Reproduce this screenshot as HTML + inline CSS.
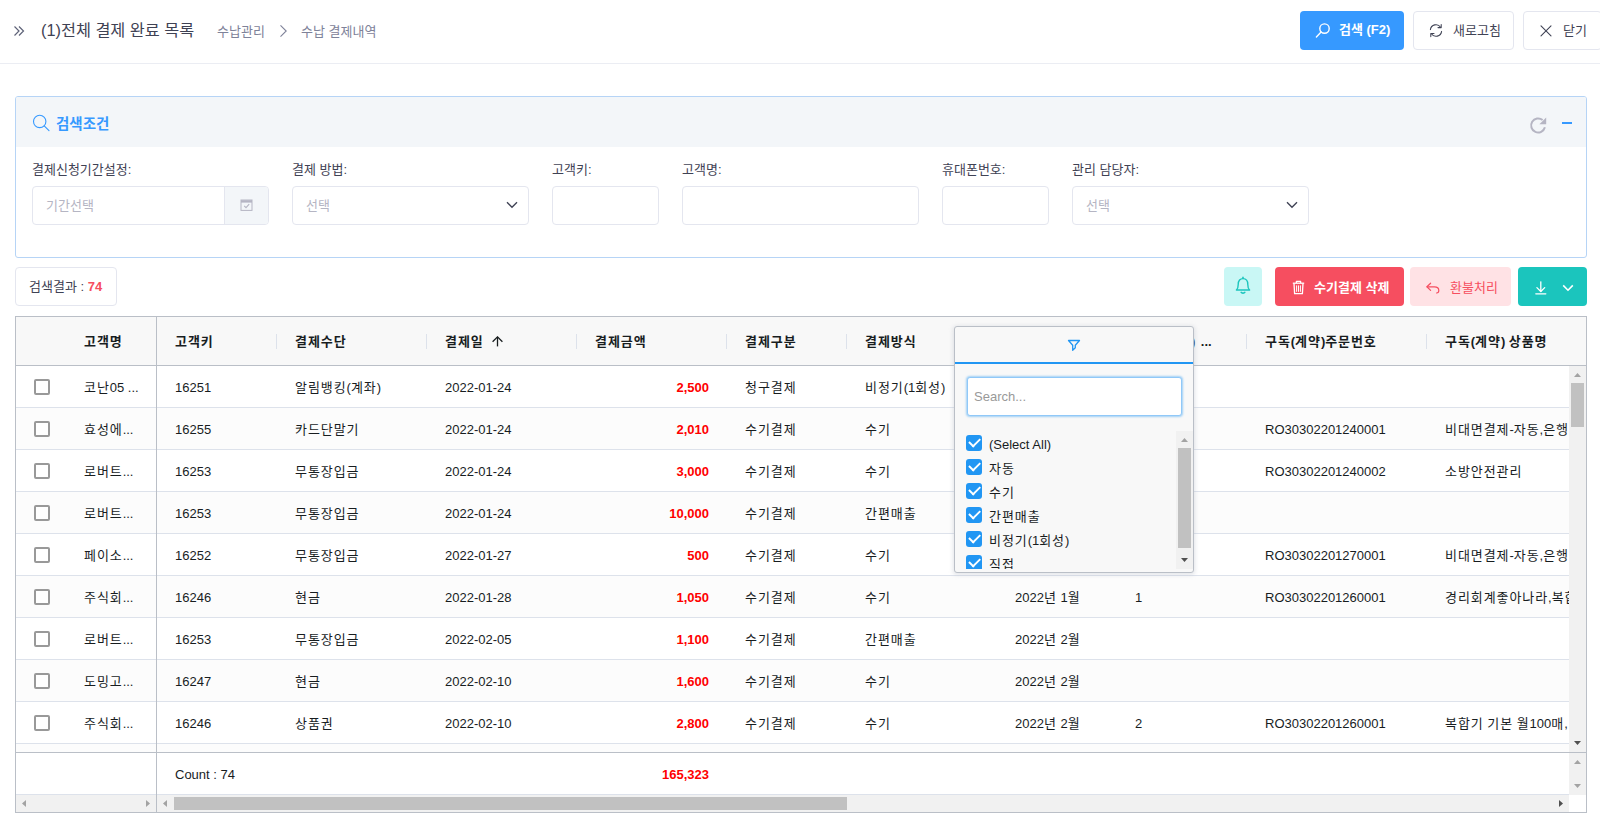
<!DOCTYPE html>
<html lang="ko">
<head>
<meta charset="utf-8">
<title>(1)전체 결제 완료 목록</title>
<style>
*{box-sizing:border-box;margin:0;padding:0}
html,body{width:1600px;height:840px;overflow:hidden;background:#fff}
body{position:relative;font-family:"Liberation Sans","Noto Sans CJK KR",sans-serif;font-size:13px;color:#3f4254}
.abs{position:absolute}
svg{display:block}
/* ---------- top header ---------- */
#hdr{left:0;top:0;width:1600px;height:64px;border-bottom:1px solid #ebedf3;background:#fff}
#title{left:41px;top:18px;font-size:16.3px;line-height:25px;color:#3f4254;white-space:nowrap;font-weight:400}
.crumb{top:22px;font-size:13px;line-height:20px;color:#7e8299;white-space:nowrap}
.tbtn{top:11px;height:39px;border-radius:4px;font-size:13px;line-height:37px;white-space:nowrap}
.tbtn span{position:absolute;top:0}
/* ---------- search panel ---------- */
#panel{left:15px;top:96px;width:1572px;height:162px;border:1px solid #b6d4f6;border-radius:3px;background:#fff}
#phead{left:0;top:0;width:1570px;height:50px;background:#f3f6f9;border-radius:2px 2px 0 0}
.flabel{top:161px;font-size:13px;line-height:18px;color:#3f4254;white-space:nowrap}
.finput{top:186px;height:39px;border:1px solid #e4e6ef;border-radius:4px;background:#fff;font-size:13px;color:#b5b5c3;line-height:37px}
.finput span{position:absolute;left:13px;top:0}
/* ---------- toolbar ---------- */
.abtn{top:267px;height:39px;border-radius:4px;font-size:13px;line-height:39px;white-space:nowrap}
/* ---------- grid ---------- */
#grid{left:15px;top:316px;width:1572px;height:497px;border:1px solid #babfc7;background:#fff;overflow:hidden;font-size:13px;color:#181d1f}
#ghead{left:0;top:0;width:1570px;height:49px;background:#f8f8f8;border-bottom:1px solid #babfc7}
.hc{top:1px;height:48px;line-height:48px;font-weight:700;font-size:13px;color:#181d1f;white-space:nowrap}
.hs{top:17px;width:1px;height:15px;background:#dde2eb}
.row{left:0;width:1553px;height:42px;border-bottom:1px solid #dde2eb;background:#fff}
.row.odd{background:#fcfcfc}
.c{top:2px;height:39px;line-height:39px;white-space:nowrap;overflow:hidden}
.k{letter-spacing:.92px}
.amt{color:#f00;font-weight:700;text-align:right}
.cb{left:18px;top:13px;width:16px;height:16px;border:2px solid #999;border-radius:2px;background:#fff}
.fi{left:11px;height:24px;line-height:27px;padding-left:23px;white-space:nowrap;width:200px;top:0}
.fi i{position:absolute;left:0;top:4px;width:16px;height:16px;border-radius:3px;background:#2196f3}
.fi i:after{content:"";position:absolute;left:3.2px;top:3.2px;width:8.5px;height:4.5px;border-left:2.2px solid #fff;border-bottom:2.2px solid #fff;transform:rotate(-45deg)}
</style>
</head>
<body>

<!-- ================= HEADER ================= -->
<div id="hdr" class="abs"></div>
<svg class="abs" style="left:13px;top:25px" width="12" height="12" viewBox="0 0 12 12" fill="none" stroke="#5e6278" stroke-width="1.2"><path d="M1.5 1.5 L6 6 L1.5 10.5 M6 1.5 L10.5 6 L6 10.5"/></svg>
<div id="title" class="abs">(1)전체 결제 완료 목록</div>
<div class="abs crumb" style="left:217px">수납관리</div>
<svg class="abs" style="left:279px;top:24px" width="9" height="14" viewBox="0 0 9 14" fill="none" stroke="#7e8299" stroke-width="1.1"><path d="M1.5 1.3 L7.2 7 L1.5 12.7"/></svg>
<div class="abs crumb" style="left:301px">수납 결제내역</div>

<div class="abs tbtn" style="left:1300px;width:104px;background:#3699ff;color:#fff;font-weight:700"><span style="left:39px">검색 (F2)</span></div>
<div class="abs tbtn" style="left:1413px;width:101px;background:#fff;border:1px solid #e4e6ef;color:#3f4254"><span style="left:39px">새로고침</span></div>
<div class="abs tbtn" style="left:1523px;width:79px;background:#fff;border:1px solid #e4e6ef;color:#3f4254"><span style="left:39px">닫기</span></div>


<!-- header icons -->
<svg class="abs" style="left:1314px;top:21px" width="18" height="18" viewBox="0 0 18 18" fill="none" stroke="#fff" stroke-width="1.4" stroke-linecap="round"><circle cx="10.5" cy="7.6" r="4.7"/><path d="M7.1 11.1 L2.4 15.9"/></svg>
<svg class="abs" style="left:1427px;top:22px" width="18" height="18" viewBox="0 0 18 18" fill="none" stroke="#3f4254" stroke-width="1.05" stroke-linecap="round" stroke-linejoin="round"><path d="M3.4 7.6 A5.6 5.6 0 0 1 13.6 5.2"/><path d="M14.2 2.4 V5.6 H11"/><path d="M14.6 9.4 A5.6 5.6 0 0 1 4.4 11.8"/><path d="M3.8 14.6 V11.4 H7"/></svg>
<svg class="abs" style="left:1540px;top:25px" width="12" height="12" viewBox="0 0 12 12" fill="none" stroke="#3f4254" stroke-width="1.1" stroke-linecap="round"><path d="M1 0.8 L11 10.8 M11 0.8 L1 10.8"/></svg>

<!-- ================= SEARCH PANEL ================= -->
<div id="panel" class="abs"><div id="phead" class="abs"></div></div>
<div class="abs" style="left:56px;top:114px;font-size:14.5px;line-height:20px;font-weight:700;color:#3699ff">검색조건</div>

<div class="abs flabel" style="left:32px">결제신청기간설정:</div>
<div class="abs flabel" style="left:292px">결제 방법:</div>
<div class="abs flabel" style="left:552px">고객키:</div>
<div class="abs flabel" style="left:682px">고객명:</div>
<div class="abs flabel" style="left:942px">휴대폰번호:</div>
<div class="abs flabel" style="left:1072px">관리 담당자:</div>

<div class="abs finput" style="left:32px;width:237px"><span>기간선택</span></div>
<div class="abs" style="left:224px;top:187px;width:44px;height:37px;background:#f3f6f9;border-left:1px solid #e4e6ef;border-radius:0 3px 3px 0"></div>
<div class="abs finput" style="left:292px;width:237px"><span>선택</span></div>
<div class="abs finput" style="left:552px;width:107px"></div>
<div class="abs finput" style="left:682px;width:237px"></div>
<div class="abs finput" style="left:942px;width:107px"></div>
<div class="abs finput" style="left:1072px;width:237px"><span>선택</span></div>


<!-- panel icons -->
<svg class="abs" style="left:32px;top:114px" width="19" height="19" viewBox="0 0 19 19" fill="none" stroke="#3699ff" stroke-width="1.1" stroke-linecap="round"><circle cx="7.7" cy="7.4" r="6.2"/><path d="M12.2 11.9 L17 16.7"/></svg>
<svg class="abs" style="left:1529px;top:116px" width="19" height="19" viewBox="0 0 19 19" fill="none" stroke="#b5b5c3" stroke-width="2"><path d="M15.9 11.3 A7 7 0 1 1 13.6 4.1"/><path d="M17.2 1.4 V8.2 H10.4 Z" fill="#b5b5c3" stroke="none"/></svg>
<div class="abs" style="left:1562px;top:122px;width:10px;height:2px;background:#3699ff"></div>
<svg class="abs" style="left:240px;top:199px" width="13" height="12" viewBox="0 0 13 12" fill="none" stroke="#b5b5c3" stroke-width="1"><rect x="1" y="1" width="11" height="10.4"/><path d="M1 2.4 H12" stroke-width="2.4"/><path d="M4.2 6.8 L6 8.6 L9.2 5.2" stroke-width="1.1"/></svg>
<svg class="abs" style="left:506px;top:201px" width="12" height="8" viewBox="0 0 12 8" fill="none" stroke="#3f4254" stroke-width="1.35"><path d="M1 1.2 L6 6.2 L11 1.2"/></svg>
<svg class="abs" style="left:1286px;top:201px" width="12" height="8" viewBox="0 0 12 8" fill="none" stroke="#3f4254" stroke-width="1.35"><path d="M1 1.2 L6 6.2 L11 1.2"/></svg>

<!-- ================= TOOLBAR ================= -->
<div class="abs" style="left:15px;top:267px;width:102px;height:39px;border:1px solid #e4e6ef;border-radius:4px;font-size:13px;line-height:38px;white-space:nowrap"><span style="position:absolute;left:13px;top:0">검색결과 : <b style="color:#f64e60">74</b></span></div>

<div class="abs abtn" style="left:1224px;width:38px;background:#c9f7f5"></div>
<div class="abs abtn" style="left:1275px;width:129px;background:#f64e60;color:#fff;font-weight:700"><span style="position:absolute;left:39px;top:1px">수기결제 삭제</span></div>
<div class="abs abtn" style="left:1410px;width:101px;background:#ffe2e5;color:#f64e60"><span style="position:absolute;left:40px;top:1px">환불처리</span></div>
<div class="abs abtn" style="left:1518px;width:69px;background:#1bc5bd"></div>


<!-- toolbar icons -->
<svg class="abs" style="left:1234px;top:276px" width="18" height="19" viewBox="0 0 18 19" fill="none" stroke="#1bc5bd" stroke-width="1.4" stroke-linejoin="round" stroke-linecap="round"><path d="M9 1.2 V2.4"/><path d="M2.4 14 C4 12.6 4.2 11 4.2 8.4 C4.2 4.6 6.2 2.6 9 2.6 C11.8 2.6 13.8 4.6 13.8 8.4 C13.8 11 14 12.6 15.6 14 Z"/><path d="M7.2 16.4 C7.8 17.4 10.2 17.4 10.8 16.4" stroke-width="1.6"/></svg>
<svg class="abs" style="left:1292px;top:280px" width="13" height="15" viewBox="0 0 13 15" fill="none" stroke="#fff" stroke-width="1.3" stroke-linejoin="round"><path d="M0.8 3.2 H12.2"/><path d="M4.4 3 V1.4 H8.6 V3"/><path d="M2 3.4 L2.6 13.6 H10.4 L11 3.4"/><path d="M4.6 5.4 V11.8 M6.5 5.4 V11.8 M8.4 5.4 V11.8" stroke-width="1"/></svg>
<svg class="abs" style="left:1425px;top:281px" width="16" height="14" viewBox="0 0 16 14" fill="none" stroke="#f64e60" stroke-width="1.2" stroke-linecap="round" stroke-linejoin="round"><path d="M5.6 2.2 L1.9 5.8 L5.6 9.4"/><path d="M2.1 5.8 H9.4 C12 5.8 13.8 7.4 13.8 9.4 C13.8 10.8 12.9 11.8 11.6 12"/></svg>
<svg class="abs" style="left:1534px;top:280px" width="14" height="15" viewBox="0 0 14 15" fill="none" stroke="#fff" stroke-width="1.3" stroke-linecap="round" stroke-linejoin="round"><path d="M6.8 1.8 V11.4"/><path d="M2.9 7.6 L6.8 11.5 L10.7 7.6"/><path d="M1.8 13.8 H11.8"/></svg>
<svg class="abs" style="left:1562px;top:284px" width="12" height="8" viewBox="0 0 12 8" fill="none" stroke="#fff" stroke-width="1.6"><path d="M1.2 1.4 L6 6.2 L10.8 1.4"/></svg>

<!-- ================= GRID ================= -->
<div id="grid" class="abs">
<!--GRID-->
<div id="ghead" class="abs"></div>
<div class="abs hc" style="left:68px"><span class="k">고객명</span></div>
<div class="abs hc" style="left:159px"><span class="k">고객키</span></div>
<div class="abs hc" style="left:279px"><span class="k">결제수단</span></div>
<div class="abs hs" style="left:260px"></div>
<div class="abs hc" style="left:429px"><span class="k">결제일</span></div>
<div class="abs hs" style="left:410px"></div>
<div class="abs hc" style="left:579px"><span class="k">결제금액</span></div>
<div class="abs hs" style="left:560px"></div>
<div class="abs hc" style="left:729px"><span class="k">결제구분</span></div>
<div class="abs hs" style="left:710px"></div>
<div class="abs hc" style="left:849px"><span class="k">결제방식</span></div>
<div class="abs hs" style="left:830px"></div>
<div class="abs hc" style="left:999px"><span class="k">결제월</span></div>
<div class="abs hs" style="left:980px"></div>
<div class="abs hc" style="left:1119px"><span class="k">구독</span>(<span class="k">계약</span>) <span style="margin-left:2px">...</span></div>
<div class="abs hs" style="left:1100px"></div>
<div class="abs hc" style="left:1249px"><span class="k">구독</span>(<span class="k">계약</span>)<span class="k">주문번호</span></div>
<div class="abs hs" style="left:1230px"></div>
<div class="abs hc" style="left:1429px"><span class="k">구독</span>(<span class="k">계약</span>) <span class="k">상품명</span></div>
<div class="abs hs" style="left:1410px"></div>
<div class="abs row" style="top:49px">
<div class="abs cb"></div>
<div class="abs c" style="left:68px;width:72px"><span class="k">코난</span>05 ...</div>
<div class="abs c" style="left:159px;width:102px">16251</div>
<div class="abs c" style="left:279px;width:132px"><span class="k">알림뱅킹</span>(<span class="k">계좌</span>)</div>
<div class="abs c" style="left:429px;width:132px">2022-01-24</div>
<div class="abs c amt" style="left:561px;width:132px">2,500</div>
<div class="abs c" style="left:729px;width:102px"><span class="k">청구결제</span></div>
<div class="abs c" style="left:849px;width:132px"><span class="k">비정기</span>(1<span class="k">회성</span>)</div>
<div class="abs c" style="left:999px;width:102px">2022<span class="k">년</span> 1<span class="k">월</span></div>
</div>
<div class="abs row odd" style="top:91px">
<div class="abs cb"></div>
<div class="abs c" style="left:68px;width:72px"><span class="k">효성에</span>...</div>
<div class="abs c" style="left:159px;width:102px">16255</div>
<div class="abs c" style="left:279px;width:132px"><span class="k">카드단말기</span></div>
<div class="abs c" style="left:429px;width:132px">2022-01-24</div>
<div class="abs c amt" style="left:561px;width:132px">2,010</div>
<div class="abs c" style="left:729px;width:102px"><span class="k">수기결제</span></div>
<div class="abs c" style="left:849px;width:132px"><span class="k">수기</span></div>
<div class="abs c" style="left:999px;width:102px">2022<span class="k">년</span> 1<span class="k">월</span></div>
<div class="abs c" style="left:1249px;width:162px">RO30302201240001</div>
<div class="abs c" style="left:1429px;width:162px"><span class="k">비대면결제</span>-<span class="k">자동</span>,<span class="k">은행</span>,<span class="k">카드</span></div>
</div>
<div class="abs row" style="top:133px">
<div class="abs cb"></div>
<div class="abs c" style="left:68px;width:72px"><span class="k">로버트</span>...</div>
<div class="abs c" style="left:159px;width:102px">16253</div>
<div class="abs c" style="left:279px;width:132px"><span class="k">무통장입금</span></div>
<div class="abs c" style="left:429px;width:132px">2022-01-24</div>
<div class="abs c amt" style="left:561px;width:132px">3,000</div>
<div class="abs c" style="left:729px;width:102px"><span class="k">수기결제</span></div>
<div class="abs c" style="left:849px;width:132px"><span class="k">수기</span></div>
<div class="abs c" style="left:999px;width:102px">2022<span class="k">년</span> 1<span class="k">월</span></div>
<div class="abs c" style="left:1249px;width:162px">RO30302201240002</div>
<div class="abs c" style="left:1429px;width:162px"><span class="k">소방안전관리</span></div>
</div>
<div class="abs row odd" style="top:175px">
<div class="abs cb"></div>
<div class="abs c" style="left:68px;width:72px"><span class="k">로버트</span>...</div>
<div class="abs c" style="left:159px;width:102px">16253</div>
<div class="abs c" style="left:279px;width:132px"><span class="k">무통장입금</span></div>
<div class="abs c" style="left:429px;width:132px">2022-01-24</div>
<div class="abs c amt" style="left:561px;width:132px">10,000</div>
<div class="abs c" style="left:729px;width:102px"><span class="k">수기결제</span></div>
<div class="abs c" style="left:849px;width:132px"><span class="k">간편매출</span></div>
<div class="abs c" style="left:999px;width:102px">2022<span class="k">년</span> 1<span class="k">월</span></div>
</div>
<div class="abs row" style="top:217px">
<div class="abs cb"></div>
<div class="abs c" style="left:68px;width:72px"><span class="k">페이소</span>...</div>
<div class="abs c" style="left:159px;width:102px">16252</div>
<div class="abs c" style="left:279px;width:132px"><span class="k">무통장입금</span></div>
<div class="abs c" style="left:429px;width:132px">2022-01-27</div>
<div class="abs c amt" style="left:561px;width:132px">500</div>
<div class="abs c" style="left:729px;width:102px"><span class="k">수기결제</span></div>
<div class="abs c" style="left:849px;width:132px"><span class="k">수기</span></div>
<div class="abs c" style="left:999px;width:102px">2022<span class="k">년</span> 1<span class="k">월</span></div>
<div class="abs c" style="left:1249px;width:162px">RO30302201270001</div>
<div class="abs c" style="left:1429px;width:162px"><span class="k">비대면결제</span>-<span class="k">자동</span>,<span class="k">은행</span>,<span class="k">카드</span></div>
</div>
<div class="abs row odd" style="top:259px">
<div class="abs cb"></div>
<div class="abs c" style="left:68px;width:72px"><span class="k">주식회</span>...</div>
<div class="abs c" style="left:159px;width:102px">16246</div>
<div class="abs c" style="left:279px;width:132px"><span class="k">현금</span></div>
<div class="abs c" style="left:429px;width:132px">2022-01-28</div>
<div class="abs c amt" style="left:561px;width:132px">1,050</div>
<div class="abs c" style="left:729px;width:102px"><span class="k">수기결제</span></div>
<div class="abs c" style="left:849px;width:132px"><span class="k">수기</span></div>
<div class="abs c" style="left:999px;width:102px">2022<span class="k">년</span> 1<span class="k">월</span></div>
<div class="abs c" style="left:1119px;width:112px">1</div>
<div class="abs c" style="left:1249px;width:162px">RO30302201260001</div>
<div class="abs c" style="left:1429px;width:162px"><span class="k">경리회계좋아나라</span>,<span class="k">복합기</span></div>
</div>
<div class="abs row" style="top:301px">
<div class="abs cb"></div>
<div class="abs c" style="left:68px;width:72px"><span class="k">로버트</span>...</div>
<div class="abs c" style="left:159px;width:102px">16253</div>
<div class="abs c" style="left:279px;width:132px"><span class="k">무통장입금</span></div>
<div class="abs c" style="left:429px;width:132px">2022-02-05</div>
<div class="abs c amt" style="left:561px;width:132px">1,100</div>
<div class="abs c" style="left:729px;width:102px"><span class="k">수기결제</span></div>
<div class="abs c" style="left:849px;width:132px"><span class="k">간편매출</span></div>
<div class="abs c" style="left:999px;width:102px">2022<span class="k">년</span> 2<span class="k">월</span></div>
</div>
<div class="abs row odd" style="top:343px">
<div class="abs cb"></div>
<div class="abs c" style="left:68px;width:72px"><span class="k">도밍고</span>...</div>
<div class="abs c" style="left:159px;width:102px">16247</div>
<div class="abs c" style="left:279px;width:132px"><span class="k">현금</span></div>
<div class="abs c" style="left:429px;width:132px">2022-02-10</div>
<div class="abs c amt" style="left:561px;width:132px">1,600</div>
<div class="abs c" style="left:729px;width:102px"><span class="k">수기결제</span></div>
<div class="abs c" style="left:849px;width:132px"><span class="k">수기</span></div>
<div class="abs c" style="left:999px;width:102px">2022<span class="k">년</span> 2<span class="k">월</span></div>
</div>
<div class="abs row" style="top:385px">
<div class="abs cb"></div>
<div class="abs c" style="left:68px;width:72px"><span class="k">주식회</span>...</div>
<div class="abs c" style="left:159px;width:102px">16246</div>
<div class="abs c" style="left:279px;width:132px"><span class="k">상품권</span></div>
<div class="abs c" style="left:429px;width:132px">2022-02-10</div>
<div class="abs c amt" style="left:561px;width:132px">2,800</div>
<div class="abs c" style="left:729px;width:102px"><span class="k">수기결제</span></div>
<div class="abs c" style="left:849px;width:132px"><span class="k">수기</span></div>
<div class="abs c" style="left:999px;width:102px">2022<span class="k">년</span> 2<span class="k">월</span></div>
<div class="abs c" style="left:1119px;width:112px">2</div>
<div class="abs c" style="left:1249px;width:162px">RO30302201260001</div>
<div class="abs c" style="left:1429px;width:162px"><span class="k">복합기</span> <span class="k">기본</span> <span class="k">월</span>100<span class="k">매</span>, <span class="k">컬러</span></div>
</div>
<div class="abs row odd" style="top:427px">
</div>
<!--/GRID-->
<svg class="abs" style="left:475px;top:18px" width="13" height="13" viewBox="0 0 13 13" fill="none" stroke="#181d1f" stroke-width="1.3"><path d="M6.5 1.8 V11.4"/><path d="M1.6 6.8 L6.5 1.9 L11.4 6.8"/></svg>
<!-- pinned separator -->
<!-- body vertical scrollbar -->
<div class="abs" style="left:1553px;top:49px;width:17px;height:386px;background:#f1f1f1"></div>
<div class="abs" style="left:1555px;top:66px;width:13px;height:44px;background:#c1c1c1"></div>
<svg class="abs" style="left:1553px;top:49px" width="17" height="17" viewBox="0 0 17 17"><path d="M5 11 L8.5 7 L12 11 Z" fill="#a3a3a3"/></svg>
<svg class="abs" style="left:1553px;top:418px" width="17" height="17" viewBox="0 0 17 17"><path d="M5 6 L8.5 10 L12 6 Z" fill="#505050"/></svg>
<!-- footer (pinned bottom) -->
<div class="abs" style="left:0;top:435px;width:1570px;height:43px;border-top:1px solid #babfc7;background:#fff"></div>
<div class="abs c" style="left:159px;top:438px;width:120px">Count : 74</div>
<div class="abs c amt" style="left:561px;top:438px;width:132px">165,323</div>
<div class="abs" style="left:1553px;top:436px;width:17px;height:42px;background:#f1f1f1"></div>
<svg class="abs" style="left:1553px;top:436px" width="17" height="17" viewBox="0 0 17 17"><path d="M5 11 L8.5 7 L12 11 Z" fill="#a3a3a3"/></svg>
<svg class="abs" style="left:1553px;top:461px" width="17" height="17" viewBox="0 0 17 17"><path d="M5 6 L8.5 10 L12 6 Z" fill="#a3a3a3"/></svg>
<!-- horizontal scrollbars -->
<div class="abs" style="left:0;top:477px;width:1553px;height:1px;background:#dde2eb"></div>
<div class="abs" style="left:0;top:478px;width:1553px;height:17px;background:#f1f1f1"></div>
<div class="abs" style="left:158px;top:480px;width:673px;height:13px;background:#c1c1c1"></div>
<svg class="abs" style="left:0;top:478px" width="17" height="17" viewBox="0 0 17 17"><path d="M10 5 L6 8.5 L10 12 Z" fill="#a3a3a3"/></svg>
<svg class="abs" style="left:123px;top:478px" width="17" height="17" viewBox="0 0 17 17"><path d="M7 5 L11 8.5 L7 12 Z" fill="#a3a3a3"/></svg>
<svg class="abs" style="left:141px;top:478px" width="17" height="17" viewBox="0 0 17 17"><path d="M10 5 L6 8.5 L10 12 Z" fill="#a3a3a3"/></svg>
<svg class="abs" style="left:1536px;top:478px" width="17" height="17" viewBox="0 0 17 17"><path d="M7 5 L11 8.5 L7 12 Z" fill="#505050"/></svg>
<div class="abs" style="left:140px;top:0;width:1px;height:495px;background:#babfc7"></div>
</div>


<!-- ================= FILTER POPUP ================= -->
<div class="abs" id="pop" style="left:954px;top:326px;width:240px;height:247px;background:#f8f8f8;border:1px solid #babfc7;border-radius:3px;box-shadow:0 1px 4px 1px rgba(186,191,199,.4);overflow:hidden;font-size:13px;color:#181d1f">
  <div class="abs" style="left:0;top:35px;width:238px;height:2px;background:#2196f3"></div>
  <svg class="abs" style="left:112px;top:11px" width="14" height="14" viewBox="0 0 14 14" fill="none" stroke="#2196f3" stroke-width="1.3" stroke-linejoin="round"><path d="M1.5 2.5 H12.5 L8.3 7.2 V9.8 L5.7 12.2 V7.2 Z"/></svg>
  <div class="abs" style="left:12px;top:50px;width:215px;height:39px;background:#fff;border:1px solid #90c8f8;border-radius:3px;box-shadow:0 0 2px 1px rgba(33,150,243,.4)"></div>
  <div class="abs" style="left:19px;top:50px;line-height:40px;color:#999">Search...</div>
  <div class="abs" id="flist" style="left:0;top:104px;width:238px;height:138px;overflow:hidden">
    <div class="abs fi" style="top:0"><i></i>(Select All)</div>
    <div class="abs fi" style="top:24px"><i></i><span class="k">자동</span></div>
    <div class="abs fi" style="top:48px"><i></i><span class="k">수기</span></div>
    <div class="abs fi" style="top:72px"><i></i><span class="k">간편매출</span></div>
    <div class="abs fi" style="top:96px"><i></i><span class="k">비정기</span>(1<span class="k">회성</span>)</div>
    <div class="abs fi" style="top:120px"><i></i><span class="k">직접</span></div>
    <div class="abs" style="left:221px;top:0;width:17px;height:138px;background:#f1f1f1"></div>
    <div class="abs" style="left:223px;top:17px;width:13px;height:100px;background:#c1c1c1"></div>
    <svg class="abs" style="left:221px;top:0" width="17" height="17" viewBox="0 0 17 17"><path d="M5 11 L8.5 7 L12 11 Z" fill="#a3a3a3"/></svg>
    <svg class="abs" style="left:221px;top:121px" width="17" height="17" viewBox="0 0 17 17"><path d="M5 6 L8.5 10 L12 6 Z" fill="#505050"/></svg>
  </div>
</div>

</body>
</html>
